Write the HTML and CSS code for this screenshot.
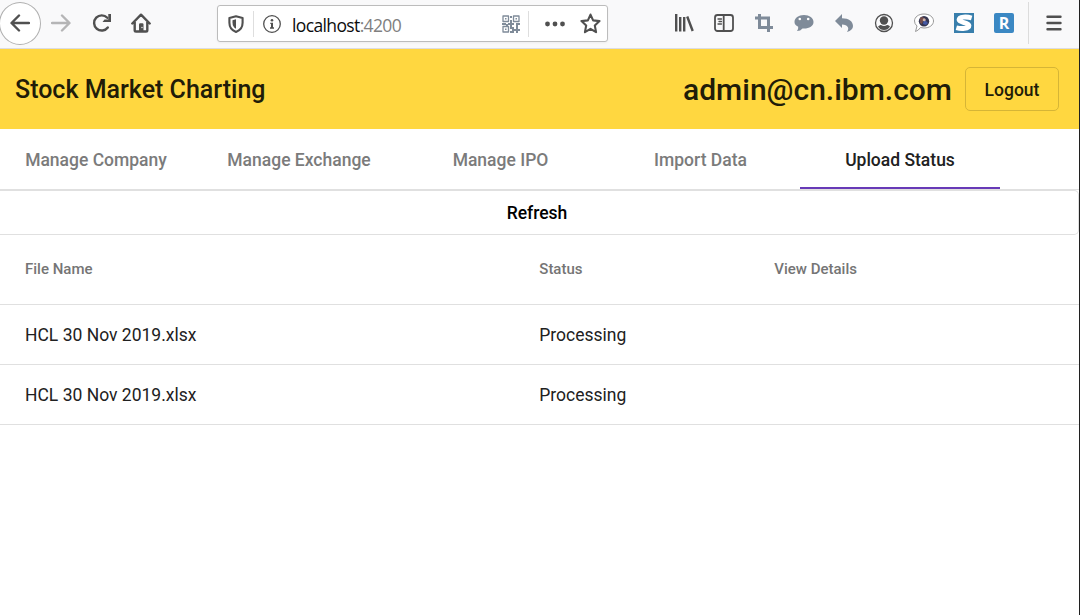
FILE: index.html
```html
<!DOCTYPE html>
<html lang="en">
<head>
<meta charset="utf-8">
<title>Stock Market Charting</title>
<link rel="stylesheet" href="styles.css">
</head>
<body>
<div class="window">
  <div class="browser-bar">
    <div class="nav-buttons">
      <span class="back"><svg class="icon" viewBox="0 0 20 20"><path class="stroke thick" d="M19 10H2M9 2.500L1.500 10L9 17.500"/></svg></span>
      <span class="tool"><svg class="icon disabled" viewBox="0 0 20 20"><path class="stroke thick" d="M1 10H18M11 2.500L18.500 10L11 17.500"/></svg></span>
      <span class="tool"><svg class="icon reload" viewBox="0 0 20 20"><path class="stroke thick" d="M15.300 4.800A7.600 7.600 0 1 0 15.800 14.500"/><path d="M19 1V9H10.500L12.500 6.500H16.300V1Z"/></svg></span>
      <span class="tool"><svg class="icon" viewBox="0 0 20 20"><path class="stroke thick" d="M1.300 10.500L10 1.700L18.700 10.500M3.700 9V17.200Q3.700 18.500 5 18.500H15Q16.300 18.500 16.300 17.200V9"/><path d="M8 18V11.500Q8 10.300 9.200 10.300H11.300Q12.500 10.300 12.500 11.500V18Z"/><circle cx="11" cy="14.500" r=".7" fill="#fff"/></svg></span>
    </div>
    <div class="address">
      <svg class="icon shield" viewBox="0 0 20 20"><path class="stroke shield-line" d="M10 2.200L16.600 4V8.800Q16.600 15.500 10 18Q3.400 15.500 3.400 8.800V4Z"/><path d="M10 5.300V14.800Q6.500 13 6.500 8.500V6.200Z"/></svg>
      <span class="divider"></span>
      <svg class="icon info" viewBox="0 0 20 20"><circle class="stroke thin" cx="10" cy="10" r="8.300"/><circle cx="10" cy="6.200" r="1.300"/><path d="M8.300 8.700H11V13.300H12V14.700H8V13.300H9V10H8.300Z"/></svg>
      <span class="url">localhost<span class="port">:4200</span></span>
      <svg class="icon qr slate" viewBox="0 0 20 20"><path class="stroke thin" d="M2 2H7.500V7.500H2ZM12.500 2H18V7.500H12.500ZM2 12.500H7.500V18H2Z"/><path d="M4 4H5.500V5.500H4ZM14.500 4H16V5.500H14.500ZM4 14.500H5.500V16H4ZM9 2H11V4H9ZM9 6H11V9H13V11H11V13H9V11H7V9H9ZM1 9H5V11H1ZM15 9H19V11H17V13H15ZM11 13H13V15H15V13H17V15H19V17H17V19H15V17H13V19H9V17H11V15H9V13ZM5 10H7V12H5Z"/></svg>
      <span class="divider page-divider"></span>
      <svg class="icon dots" viewBox="0 0 20 20"><circle cx="2.500" cy="10" r="2.400"/><circle cx="10" cy="10" r="2.400"/><circle cx="17.500" cy="10" r="2.400"/></svg>
      <svg class="icon star" viewBox="0 0 20 20"><path class="stroke star-line" d="M10 1.500L12.500 7L18.600 7.700L14.100 11.900L15.300 18.200L10 15.100L4.700 18.200L5.900 11.900L1.400 7.700L7.500 7Z"/></svg>
    </div>
    <div class="extensions">
      <span class="tool"><svg class="icon" viewBox="0 0 20 20"><path class="stroke thick flat" d="M2.200 1V18.500M6.200 4V18.500M10.200 4V18.500M13.200 3.500L18.700 18"/></svg></span>
      <span class="tool"><svg class="icon" viewBox="0 0 20 20"><rect class="stroke" x="1" y="2" width="18" height="16" rx="2.500"/><path class="stroke" d="M9.700 2V18"/><path class="stroke thin" d="M4 6H7.500M5 8.500H7.500M4 11H7.500"/></svg></span>
      <span class="tool"><svg class="icon slate" viewBox="0 0 20 20"><path class="stroke crop" d="M1 5H14.500V19M5.500 1V14.500H19"/></svg></span>
      <span class="tool"><svg class="icon slate" viewBox="0 0 20 20"><path d="M10 2C15.500 2 19.500 5 19.500 9S15.500 15.500 10 15.500L8.500 15.400Q6.500 18 3 18Q4.500 16.500 4.200 13.800Q.5 12 .5 9C.5 5 4.500 2 10 2Z"/><circle cx="5.800" cy="6" r="1.300" fill="#fff"/><circle cx="14.200" cy="6" r="1.300" fill="#fff"/></svg></span>
      <span class="tool"><svg class="icon slate" viewBox="0 0 20 20"><path d="M1 8L8 1V5.200C15 5.200 19 8.500 19 13Q19 17 13 19Q17 12.500 8 11.500V15Z"/></svg></span>
      <span class="tool"><svg class="icon" viewBox="0 0 20 20"><circle class="stroke thin" cx="10" cy="10" r="8.500"/><circle cx="10" cy="7.500" r="4.200"/><path d="M4 13.500Q6 11.500 7 12Q10 14 13 12Q15 11.800 16 13.500Q14 17 10 17Q6 17 4 13.500Z"/></svg></span>
      <span class="tool"><svg class="icon" viewBox="0 0 20 20"><path d="M10 1C15.500 1 19.500 4 19.500 8S15.500 15 10 15L6.500 14.500Q4.500 17.500 1.500 18.500L3 13Q.5 11 .5 8C.5 4 4.500 1 10 1Z" fill="#fff" stroke="#999"/><circle cx="10" cy="8.300" r="5.200" fill="#353550"/><path d="M6 5Q8 3 10 5L8 11L6 10Z" fill="#754e4c"/><path d="M10 6L14 10L12 12L9 11Z" fill="#4459a5"/><circle cx="10.200" cy="6.700" r="1.500" fill="#d2b5aa"/></svg></span>
      <span class="tool"><span class="badge-s"><svg class="icon" viewBox="0 0 20 20"><path d="M18.500 4.400C13 2.800 4.500 2.800 4.500 6.500C4.500 9.800 15.500 9.300 15.500 12.800C15.500 16.500 7 16.800 1.500 15.300" fill="none" stroke="#fff" stroke-width="5.400"/></svg></span></span>
      <span class="tool"><span class="badge-r">R</span></span>
    </div>
    <span class="menu"><svg class="icon" viewBox="0 0 20 20"><path class="stroke thick" d="M3.500 3.700H16.500M3.500 10H16.500M3.500 16.300H16.500"/></svg></span>
  </div>
  <header class="app-bar">
    <h1 class="app-title">Stock Market Charting</h1>
    <span class="user">admin@cn.ibm.com</span>
    <button class="logout">Logout</button>
  </header>
  <nav class="tabs">
    <a class="tab first">Manage Company</a>
    <a class="tab second">Manage Exchange</a>
    <a class="tab">Manage IPO</a>
    <a class="tab">Import Data</a>
    <a class="tab active">Upload Status</a>
  </nav>
  <button class="refresh">Refresh</button>
  <div class="table">
    <div class="row head"><span>File Name</span><span>Status</span><span>View Details</span></div>
    <div class="row"><span>HCL 30 Nov 2019.xlsx</span><span>Processing</span><span></span></div>
    <div class="row"><span>HCL 30 Nov 2019.xlsx</span><span>Processing</span><span></span></div>
  </div>
</div>
</body>
</html>
```

FILE: styles.css
```css
* { box-sizing: border-box; }
body { margin: 0; background: #fff; font-family: Roboto, "Liberation Sans", sans-serif; color: #212121; }
.window { width: 1080px; height: 615px; overflow: hidden; border-right: 1px solid #202020; }

.browser-bar { display: flex; height: 49px; background: #f9f9fa; border-bottom: 1px solid #dcdce1; }
.icon { width: 20px; height: 20px; flex: none; display: block; fill: #505050; stroke: none; color: #505050; }
.stroke { fill: none; stroke: currentColor; stroke-width: 1.8; stroke-linecap: round; stroke-linejoin: round; }
.thick { stroke-width: 2.4; }
.thin { stroke-width: 1.3; }
.shield-line { stroke-width: 2.1; }
.star-line { stroke-width: 2; }
.flat { stroke-linecap: butt; }
.crop { stroke-width: 3; stroke-linecap: butt; stroke-linejoin: miter; }
.icon.slate { fill: #7f8b99; color: #7f8b99; }
.icon.disabled { color: #b5b5b6; }
.nav-buttons { display: flex; width: 217px; height: 46px; align-items: center; }
.back { display: flex; width: 42px; height: 43px; margin-left: -1px; align-items: center; justify-content: center; background: #fff; border: 1px solid #b0b0b0; border-radius: 50%; }
.tool { display: flex; width: 40px; height: 46px; align-items: center; justify-content: center; }
.reload { margin-left: 2px; }

.address { display: flex; width: 391px; height: 37px; margin-top: 5px; align-items: center; background: #fff; border: 1px solid #bcbcbc; border-radius: 3px; box-shadow: 0 1px 3px #0000000d; flex: none; }
.shield { margin-left: 8px; }
.divider { flex: none; width: 1px; height: 26px; margin-left: 7px; background: #dedede; }
.info { width: 20px; height: 20px; margin-left: 8px; }
.url { flex: none; width: 200px; margin: 2px 0 0 10px; font: 17.500px/24px "Open Sans", "Noto Sans", sans-serif; letter-spacing: -.63px; color: #0c0c0d; }
.port { color: #808080; }
.qr { margin-left: 9px; }
.page-divider { margin-left: 7px; }
.dots { margin-left: 16px; }
.star { width: 21px; height: 21px; margin-left: 14.500px; }
.extensions { display: flex; flex: none; margin-left: 56px; }
.badge-s { background: #397fac; border: 1px solid #397fac; }
.badge-s .icon { width: 18px; height: 18px; }
.badge-r { width: 20px; height: 20px; border-radius: 2px; background: #3b88c3; color: #fff; font: bold 16px/20px "Open Sans", sans-serif; text-align: center; }
.menu { display: flex; flex: none; width: 51px; height: 42px; margin: 2px 0 0 4px; align-items: center; justify-content: center; border-left: 1px solid #dcdcdc; }

.app-bar { display: flex; height: 80px; padding: 0 20px 0 15px; align-items: center; background: #ffd740; color: #211c08; }
.app-title { margin: 0 auto 0 0; padding-top: 2px; font-size: 25px; line-height: 40px; font-weight: 500; }
.user { margin-right: 13px; padding-top: 2px; font-size: 30px; line-height: 40px; font-weight: 500; }
.logout { width: 94px; height: 44px; padding: 2px 0 0; background: none; border: 1px solid #d6b536; border-radius: 5px; font: 500 17.5px Roboto, sans-serif; color: #211c08; }

.tabs { display: flex; height: 61px; border-bottom: 1px solid #e0e0e0; }
.tab { display: flex; width: 200px; height: 60px; padding: 1px 0 0 1px; align-items: center; justify-content: center; font-size: 17.5px; font-weight: 500; color: #7b7b7b; }
.tab.first { width: 197px; padding: 1px 5px 0 0; }
.tab.second { width: 203px; }
.tab.active { padding: 3px 0 0; color: #212121; border-bottom: 2px solid #673ab7; }
.refresh { display: block; width: 100%; height: 45px; padding: 0 4px 0 0; background: #fff; border: 1px solid #e0e0e0; border-left: 0; border-radius: 0 5px 5px 0; font: 500 17.5px Roboto, sans-serif; color: #000; }
.row { display: grid; grid-template-columns: 514.300px 235px 1fr; height: 60px; padding-left: 25px; align-items: center; border-bottom: 1px solid #e0e0e0; font-size: 17.5px; }
.row.head { height: 70px; padding-bottom: 1px; font-size: 15px; font-weight: 500; color: #757575; }
```
